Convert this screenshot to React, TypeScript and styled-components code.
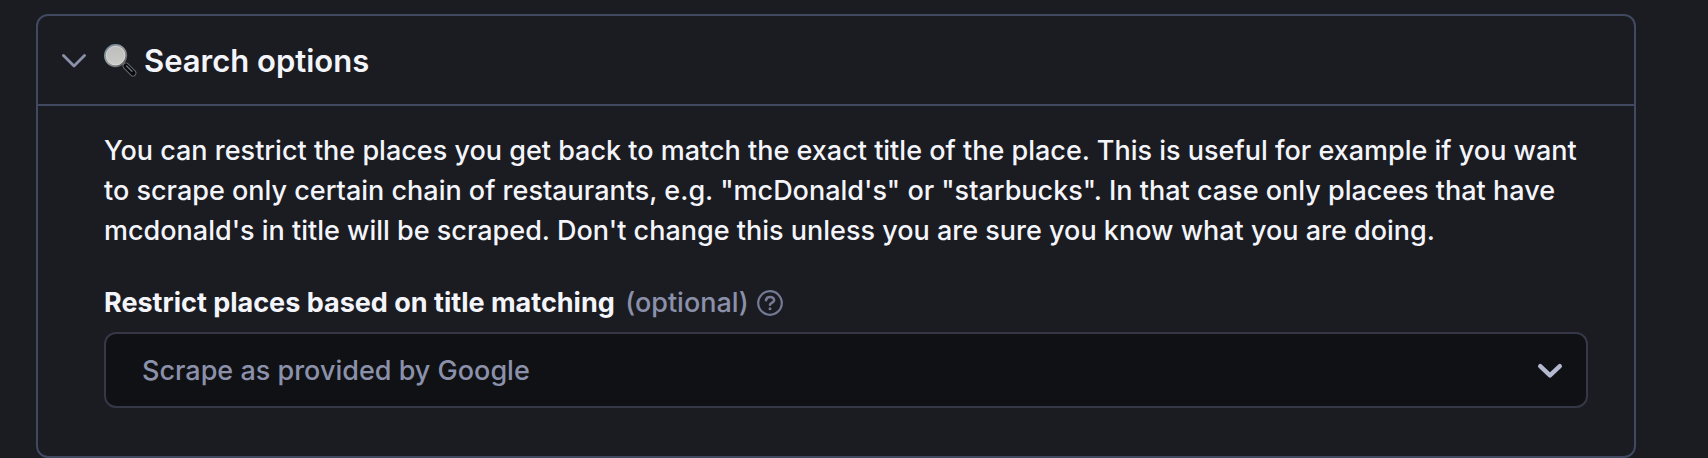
import React, { useState } from "react";
import styled, { createGlobalStyle } from "styled-components";

const colors = {
  page: "#1b1c21",
  field: "#101114",
  border: "#414961",
  fieldBorder: "#343847",
  text: "#f4f5fb",
  muted: "#8c91ab",
  icon: "#747a94",
  arrow: "#b5b9d0",
};

const GlobalStyle = createGlobalStyle`
  *, *::before, *::after { box-sizing: border-box; }
  body {
    margin: 0;
    background: ${colors.page};
    color: ${colors.text};
    font-family: Inter, "Liberation Sans", sans-serif;
    font-size: 27px;
    font-weight: 500;
    line-height: 40px;
  }
`;

const Page = styled.main`
  padding: 14px 72px 0 36px;
`;

const Card = styled.section`
  border: 2px solid ${colors.border};
  border-radius: 12px;
`;

const Heading = styled.h2`
  margin: 0;
  font-size: 31px;
  font-weight: 600;
  line-height: 40px;
`;

const Toggle = styled.button`
  display: flex;
  align-items: center;
  width: 100%;
  padding: 25px 24px 23px;
  border: 0;
  background: none;
  color: inherit;
  font: inherit;
  text-align: left;
  cursor: pointer;
`;

const Chevron = styled.svg<{ $open: boolean }>`
  flex: none;
  margin-right: 18px;
  transform: ${({ $open }) => ($open ? "none" : "rotate(-90deg)")};
`;

const Glass = styled.svg`
  flex: none;
  margin-right: 6px;
`;

const Body = styled.div`
  padding: 25px 46px 48px 66px;
  border-top: 2px solid ${colors.border};
`;

const Description = styled.p`
  margin: 0 0 32px;
`;

const LabelRow = styled.div`
  display: flex;
  align-items: center;
  gap: 8px;
  margin-bottom: 9px;
`;

const Label = styled.label`
  font-weight: 700;
`;

const Optional = styled.span`
  margin-left: 4px;
  color: ${colors.muted};
  font-weight: 500;
`;

const HelpButton = styled.button`
  display: flex;
  padding: 0;
  border: 0;
  background: none;
  color: ${colors.icon};
  cursor: help;
`;

const SelectField = styled.div`
  display: grid;
  align-items: center;
  > * { grid-area: 1 / 1; }
`;

const Select = styled.select`
  appearance: none;
  width: 100%;
  height: 76px;
  padding: 2px 72px 0 36px;
  border: 2px solid ${colors.fieldBorder};
  border-radius: 12px;
  background: ${colors.field};
  color: ${colors.muted};
  font: inherit;
`;

const SelectArrow = styled.svg`
  justify-self: end;
  margin: 2px 25px 0 0;
  pointer-events: none;
`;

function MagnifyingGlass() {
  return (
    <Glass width="34" height="34" viewBox="0 0 34 34" aria-hidden="true">
      <defs>
        <linearGradient id="rim" x1="0" y1="0" x2="1" y2="1">
          <stop offset="0" stopColor="#6f8799" />
          <stop offset="0.5" stopColor="#9b9d9f" />
          <stop offset="1" stopColor="#4d4d4d" />
        </linearGradient>
        <linearGradient id="lens" x1="0" y1="0" x2="0" y2="1">
          <stop offset="0" stopColor="#bcbcbb" />
          <stop offset="1" stopColor="#cbcbca" />
        </linearGradient>
      </defs>
      <path d="M18.500 18.500l4 4" stroke="#9a9c9f" strokeWidth="3" />
      <path d="M22 22l7 7" stroke="#686b70" strokeWidth="6.800" strokeLinecap="round" />
      <path d="M22 22l7 7" stroke="#090a0b" strokeWidth="5" strokeLinecap="round" />
      <path d="M22.600 22l5.400 5.200" stroke="#66727b" strokeWidth="1.400" strokeLinecap="round" />
      <circle cx="11.600" cy="11.600" r="10.600" fill="url(#lens)" stroke="url(#rim)" strokeWidth="2" />
      <circle cx="11.600" cy="11.600" r="9.300" fill="none" stroke="#dededd" strokeWidth="0.700" />
    </Glass>
  );
}

export default function App() {
  const [open, setOpen] = useState(true);
  return (
    <>
      <GlobalStyle />
      <Page>
        <Card>
          <Heading>
            <Toggle type="button" aria-expanded={open} onClick={() => setOpen(!open)}>
              <Chevron $open={open} width="24" height="16" viewBox="0 0 24 16" fill="none" aria-hidden="true">
                <path d="M1.500 2.500L12 13L22.500 2.500" stroke={colors.muted} strokeWidth="2.800" strokeLinecap="round" strokeLinejoin="round" />
              </Chevron>
              <MagnifyingGlass />
              Search options
            </Toggle>
          </Heading>
          {open && (
            <Body>
              <Description>
                You can restrict the places you get back to match the exact title of the place. This is
                useful for example if you want to scrape only certain chain of restaurants, e.g.
                "mcDonald's" or "starbucks". In that case only placees that have mcdonald's in title will
                be scraped. Don't change this unless you are sure you know what you are doing.
              </Description>
              <LabelRow>
                <Label htmlFor="title-matching">
                  Restrict places based on title matching <Optional>(optional)</Optional>
                </Label>
                <HelpButton type="button" aria-label="Help">
                  <svg width="26" height="26" viewBox="0 0 26 26" fill="none" stroke="currentColor" strokeWidth="2.200" strokeLinecap="round" strokeLinejoin="round">
                    <circle cx="13" cy="13" r="11.800" />
                    <path strokeWidth="2.600" d="M9 10.200C9.300 8.100 11 7 13 7c2.300 0 4.100 1.300 4.100 3.200 0 2.500-4.100 2.700-4.100 4.600" />
                    <circle cx="13" cy="18.800" r="0.700" fill="currentColor" strokeWidth="1.600" />
                  </svg>
                </HelpButton>
              </LabelRow>
              <SelectField>
                <Select id="title-matching">
                  <option>Scrape as provided by Google</option>
                </Select>
                <SelectArrow width="26" height="16" viewBox="0 0 26 16" fill="none" aria-hidden="true">
                  <path d="M3.200 3.200L13 12.400L22.800 3.200" stroke={colors.arrow} strokeWidth="4.400" strokeLinecap="round" strokeLinejoin="round" />
                </SelectArrow>
              </SelectField>
            </Body>
          )}
        </Card>
      </Page>
    </>
  );
}
